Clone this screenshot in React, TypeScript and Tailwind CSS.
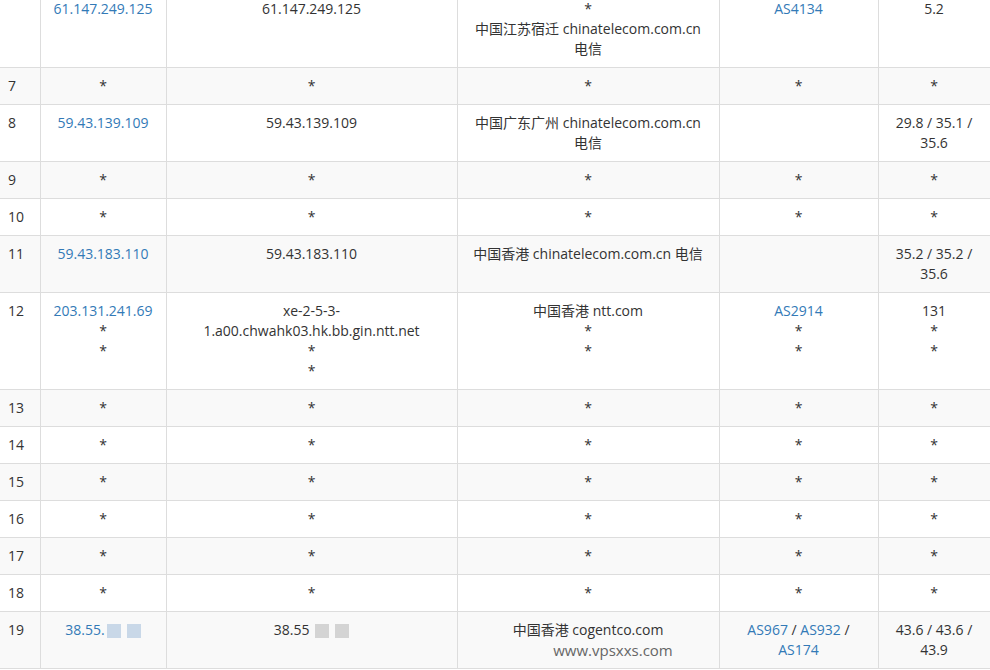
const L = "text-[#337ab7]";
type Cell = React.ReactNode;
const S = "*";
function Stars({ n }: { n: number }) {
  return <>{Array.from({ length: n }).map((_, i) => <div key={i}>*</div>)}</>;
}
const Blur = ({ c }: { c: string }) => (
  <span className="inline-flex align-middle gap-[6px] ml-[2px]">
    <span className={`inline-block w-[14px] h-[14px] ${c}`} />
    <span className={`inline-block w-[14px] h-[14px] ${c}`} />
  </span>
);
const rows: Cell[][] = [
  ["", <span className={L}>61.147.249.125</span>, "61.147.249.125", <><div>*</div><div>中国江苏宿迁 chinatelecom.com.cn</div><div>电信</div></>, <span className={L}>AS4134</span>, "5.2"],
  ["7", S, S, S, S, S],
  ["8", <span className={L}>59.43.139.109</span>, "59.43.139.109", <><div>中国广东广州 chinatelecom.com.cn</div><div>电信</div></>, "", <><div>29.8 / 35.1 /</div><div>35.6</div></>],
  ["9", S, S, S, S, S],
  ["10", S, S, S, S, S],
  ["11", <span className={L}>59.43.183.110</span>, "59.43.183.110", "中国香港 chinatelecom.com.cn 电信", "", <><div>35.2 / 35.2 /</div><div>35.6</div></>],
  ["12", <><div className={L}>203.131.241.69</div><Stars n={2} /></>, <><div>xe-2-5-3-</div><div>1.a00.chwahk03.hk.bb.gin.ntt.net</div><Stars n={2} /></>, <><div>中国香港 ntt.com</div><Stars n={2} /></>, <><div className={L}>AS2914</div><Stars n={2} /></>, <><div>131</div><Stars n={2} /></>],
  ["13", S, S, S, S, S],
  ["14", S, S, S, S, S],
  ["15", S, S, S, S, S],
  ["16", S, S, S, S, S],
  ["17", S, S, S, S, S],
  ["18", S, S, S, S, S],
  ["19", <span className={L}>38.55.<Blur c="bg-[#c9d8e8]" /></span>, <span>38.55 <Blur c="bg-[#d4d4d4]" /></span>, <><div>中国香港 cogentco.com</div><div className="text-[#666] text-[15px] pl-[50px]">www.vpsxxs.com</div></>, <><div><span className={L}>AS967</span> / <span className={L}>AS932</span> /</div><div className={L}>AS174</div></>, <><div>43.6 / 43.6 /</div><div>43.9</div></>],
];
const widths = ["w-[40px]", "w-[126px]", "w-[291px]", "w-[262px]", "w-[159px]", "w-[112px]"];
export default function App() {
  return (
    <div className="w-[990px] h-[670px] overflow-hidden bg-white" style={{ fontFamily: '"Open Sans","Noto Sans CJK SC",sans-serif' }}>
      <table className="border-collapse table-fixed w-[990px] mt-[-10px] text-[14px] leading-[20px] text-[#333]">
        <tbody>
          {rows.map((r, i) => (
            <tr key={i} className={i % 2 === 1 ? "bg-[#f9f9f9]" : "bg-white"}>
              {r.map((c, j) => (
                <td key={j} className={`${widths[j]} border border-[#ddd] ${j === 0 ? "border-l-0 text-left pl-[8px]" : "text-center px-[8px]"} py-[8px] align-top`}>
                  {c}
                </td>
              ))}
            </tr>
          ))}
        </tbody>
      </table>
    </div>
  );
}
